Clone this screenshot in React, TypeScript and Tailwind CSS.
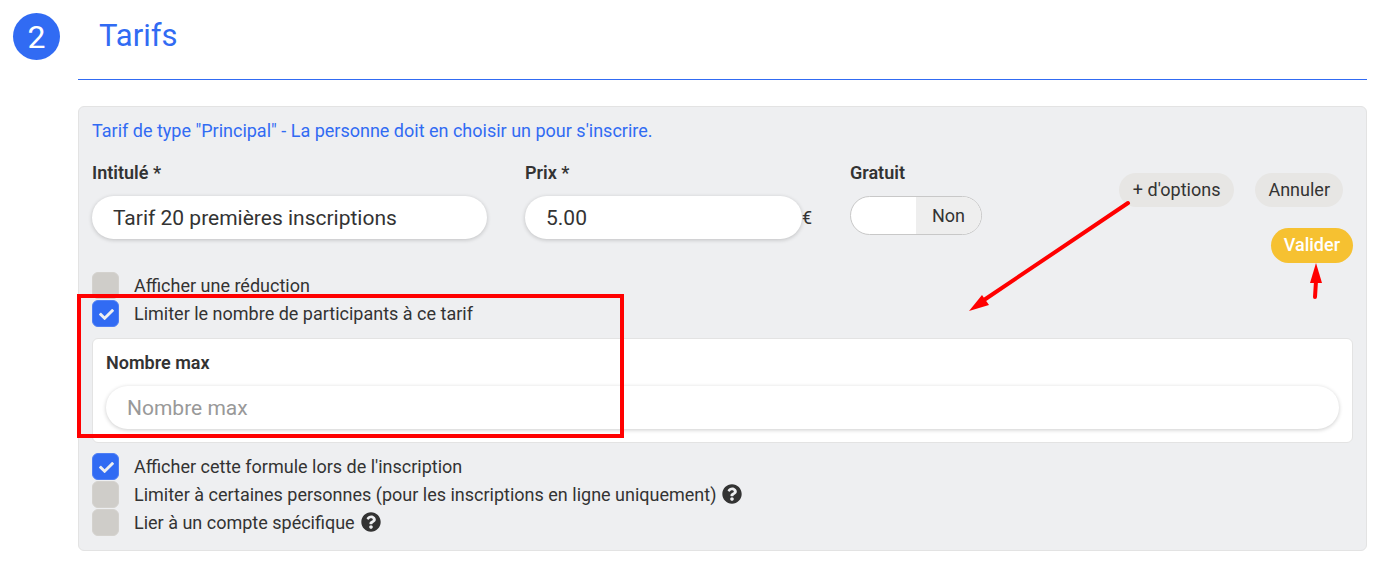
import React, { useState } from "react";
import { FaCheck, FaQuestionCircle } from "react-icons/fa";

type OptionProps = {
  id: string;
  label: string;
  defaultChecked?: boolean;
  help?: boolean;
};

const Option = ({ id, label, defaultChecked = false, help = false }: OptionProps) => (
  <div className="flex h-7 items-center">
    <span className="relative mr-[15px] grid size-[27px] place-items-center">
      <input
        id={id}
        type="checkbox"
        defaultChecked={defaultChecked}
        className="peer size-[27px] appearance-none rounded-md border border-[#d4d2ce] bg-[#cfcdc9] checked:border-[#4f7ff5] checked:bg-[#316bf3]"
      />
      <FaCheck className="pointer-events-none absolute mt-0.5 ml-px hidden size-[15px] text-[#eeeff1] peer-checked:block" />
    </span>
    <label htmlFor={id} className="pt-0.5">
      {label}
    </label>
    {help && (
      <button type="button" aria-label="Aide" className="ml-[6px]">
        <FaQuestionCircle className="size-5" />
      </button>
    )}
  </div>
);

const inputClass =
  "h-[43px] w-full min-w-0 rounded-full bg-white px-[21px] text-[21px] shadow-[0_1px_4px_rgba(0,0,0,0.2)] outline-none placeholder:text-[#999]";

const App = () => {
  const [free, setFree] = useState(false);

  return (
    <div className="min-h-screen bg-white pt-[13px] pr-[21px] pb-[13px] pl-[13px] font-[Roboto,sans-serif] text-lg leading-7 text-[#333]">
      <header className="flex">
        <span className="grid size-[47px] shrink-0 place-items-center rounded-full bg-[#316bf3] text-[32px] text-white">
          2
        </span>
        <h2 className="ml-[18px] flex-1 border-b border-[#316bf3] pb-5 pl-[21px] text-[31px] leading-[46px] text-[#316bf3]">
          Tarifs
        </h2>
      </header>

      <section className="relative mt-[26px] ml-[65px] rounded-md border border-[#e3e3e3] bg-[#eeeff1] px-[13px] pt-[10px] pb-[14px]">
        <p className="text-[#316bf3]">
          Tarif de type "Principal" - La personne doit en choisir un pour s'inscrire.
        </p>

        <div className="mt-[14px] grid grid-cols-[395fr_287fr_132fr_333fr] gap-x-[38px]">
          <div>
            <label htmlFor="title" className="mb-[9px] block font-semibold">
              Intitulé *
            </label>
            <input id="title" type="text" defaultValue="Tarif 20 premières inscriptions" className={inputClass} />
          </div>

          <div>
            <label htmlFor="price" className="mb-[9px] block font-semibold">
              Prix *
            </label>
            <div className="flex items-center">
              <input id="price" type="text" defaultValue="5.00" className={inputClass} />
              <span>€</span>
            </div>
          </div>

          <div>
            <span id="free-label" className="mb-[9px] block font-semibold">
              Gratuit
            </span>
            <button
              type="button"
              role="switch"
              aria-checked={free}
              aria-labelledby="free-label"
              onClick={() => setFree(!free)}
              className="grid h-[39px] w-full grid-cols-2 items-center overflow-hidden rounded-full border border-[#c8c8c8] bg-white"
            >
              {free ? (
                <>
                  <span className="grid h-full place-items-center bg-[#316bf3] text-white">Oui</span>
                  <span />
                </>
              ) : (
                <>
                  <span />
                  <span className="grid h-full place-items-center bg-[#eee]">Non</span>
                </>
              )}
            </button>
          </div>

          <div className="flex flex-col items-end pt-[14px]">
            <div className="mr-[10px] flex gap-[21px]">
              <div className="relative">
                <button type="button" className="h-[34px] rounded-full bg-[#e7e6e4] px-[14px] whitespace-nowrap">
                  + d'options
                </button>
                <svg
                  className="pointer-events-none absolute top-[26px] right-[103px] h-[112px] w-[162px]"
                  viewBox="0 0 162 112"
                  aria-hidden="true"
                >
                  <path d="M159 4 15 101" stroke="#f00" strokeWidth="4" strokeLinecap="round" />
                  <path d="M0 112 13 96 20 106Z" fill="#f00" />
                </svg>
              </div>
              <button type="button" className="h-[34px] rounded-full bg-[#e7e6e4] px-[13px]">
                Annuler
              </button>
            </div>
            <div className="relative mt-[21px]">
              <button type="button" className="h-[35px] rounded-full bg-[#f6c131] px-[13px] pb-0.5 font-medium text-white">
                Valider
              </button>
              <svg
                className="pointer-events-none absolute top-[35px] right-[29px] h-[38px] w-[16px]"
                viewBox="0 0 16 38"
                aria-hidden="true"
              >
                <path d="M7 34 8 18" stroke="#f00" strokeWidth="4" strokeLinecap="round" />
                <path d="M8 0 14 20H2Z" fill="#f00" />
              </svg>
            </div>
          </div>
        </div>

        <div className="mt-2">
          <Option id="discount" label="Afficher une réduction" />
          <Option id="limit" label="Limiter le nombre de participants à ce tarif" defaultChecked />
        </div>

        <div className="mt-[11px] mb-[9px] rounded-md border border-[#e3e3e3] bg-white px-[13px] pt-[10px] pb-[13px]">
          <label htmlFor="max" className="mb-[9px] block font-semibold">
            Nombre max
          </label>
          <input id="max" type="text" placeholder="Nombre max" className={inputClass} />
        </div>

        <Option id="display" label="Afficher cette formule lors de l'inscription" defaultChecked />
        <Option id="people" label="Limiter à certaines personnes (pour les inscriptions en ligne uniquement)" help />
        <Option id="account" label="Lier à un compte spécifique" help />

        <div className="pointer-events-none absolute top-[187px] -left-[2px] h-[144px] w-[547px] border-4 border-[#f00]" />
      </section>
    </div>
  );
};

export default App;
